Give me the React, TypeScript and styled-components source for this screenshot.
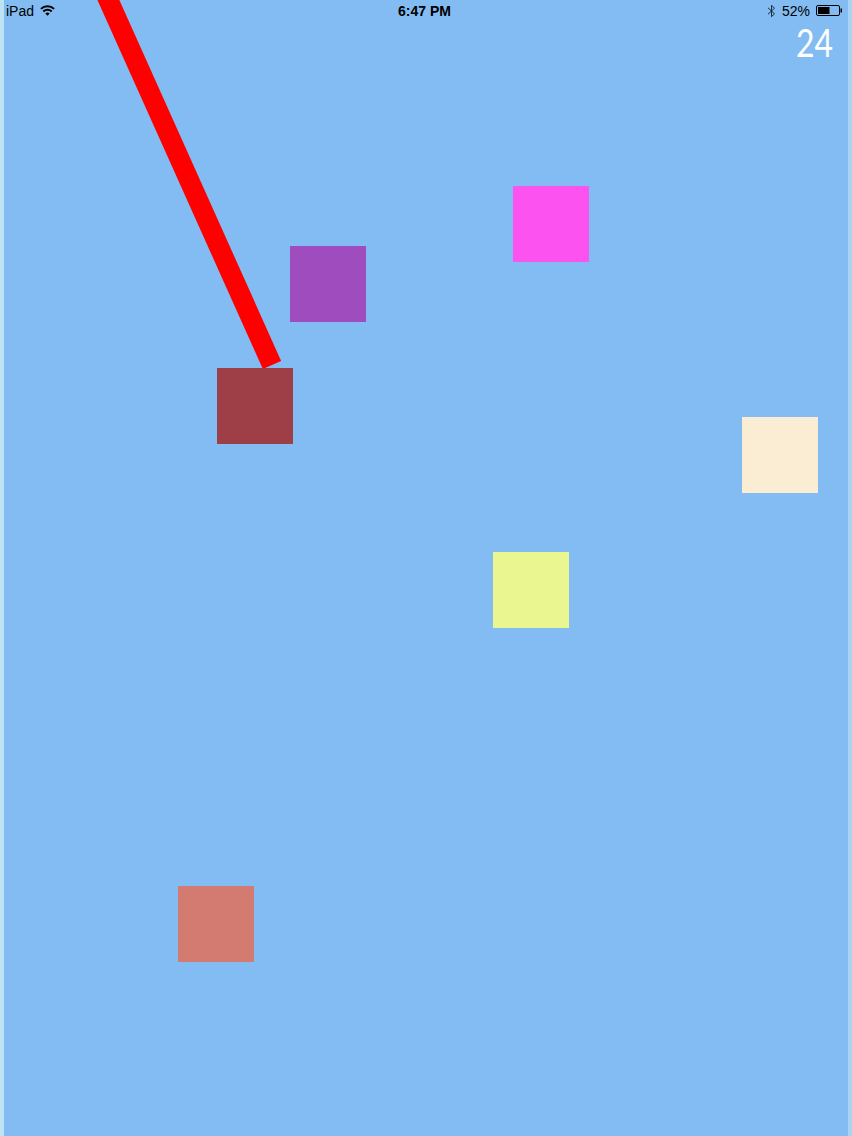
import styled, { createGlobalStyle } from "styled-components";

const GlobalStyle = createGlobalStyle`
  html, body {
    margin: 0;
    padding: 0;
    background: #83bcf2;
  }
  #root {
    width: 852px;
    height: 1136px;
  }
`;

const blocks = [
  { x: 290, y: 246, color: "#9f4cbe" },
  { x: 513, y: 186, color: "#fc52ef" },
  { x: 217, y: 368, color: "#9e3e47" },
  { x: 742, y: 417, color: "#fbecd4" },
  { x: 493, y: 552, color: "#eaf68f" },
  { x: 178, y: 886, color: "#d47b71" },
];

export default function App() {
  return (
    <>
      <GlobalStyle />
      <Screen>
        <Edge side="left" />
        <Field>
          <StatusBar>
            <StatusSide>
              <span>iPad</span>
              <WifiIcon />
            </StatusSide>
            <Clock>6:47 PM</Clock>
            <StatusSide align="right">
              <BluetoothIcon />
              <span>52%</span>
              <BatteryIcon />
            </StatusSide>
          </StatusBar>
          <ScoreRow>
            <Score>24</Score>
          </ScoreRow>
        </Field>
        <Edge side="right" />
        <Canvas>
          <Rope viewBox="0 0 852 1136" width="852" height="1136">
            <line
              x1="103"
              y1="-12"
              x2="272"
              y2="365"
              stroke="#ff0000"
              strokeWidth="20"
            />
          </Rope>
          {blocks.map((b, i) => (
            <Block key={i} color={b.color} style={{ left: b.x, top: b.y }} />
          ))}
        </Canvas>
      </Screen>
    </>
  );
}

function WifiIcon() {
  return (
    <svg width="15" height="11" viewBox="0 0 15 11">
      <path d="M0.9 3.9 A9.5 9.5 0 0 1 14.1 3.9" fill="none" stroke="#000" strokeWidth="2" />
      <path d="M3.3 6.5 A6 6 0 0 1 11.7 6.5" fill="none" stroke="#000" strokeWidth="2" />
      <path d="M7.5 10.8 L5.3 8.5 A3.1 3.1 0 0 1 9.7 8.5 Z" fill="#000" />
    </svg>
  );
}

function BluetoothIcon() {
  return (
    <svg width="9" height="14" viewBox="0 0 9 14">
      <path
        d="M1 3.8 L7.5 9.8 L4.5 12.7 L4.5 1.3 L7.5 4.2 L1 10.2"
        fill="none"
        stroke="#1c2a3a"
        strokeWidth="1"
      />
    </svg>
  );
}

function BatteryIcon() {
  return (
    <svg width="27" height="11" viewBox="0 0 27 11">
      <rect x="0.5" y="0.5" width="23" height="10" rx="1.5" fill="none" stroke="#000" strokeWidth="1" />
      <rect x="2" y="2" width="11.5" height="7" fill="#000" />
      <rect x="24.5" y="3.5" width="1.5" height="4" fill="#000" />
    </svg>
  );
}

const Screen = styled.div`
  position: relative;
  display: flex;
  width: 852px;
  height: 1136px;
  overflow: hidden;
  background: #83bcf2;
`;

const Edge = styled.div<{ side: "left" | "right" }>`
  width: 4px;
  flex: none;
  background: ${(p) => (p.side === "left" ? "#bde4f6" : "#a8d4f2")};
`;

const Field = styled.div`
  position: relative;
  z-index: 2;
  flex: 1;
  display: flex;
  flex-direction: column;
`;

const StatusBar = styled.div`
  display: grid;
  grid-template-columns: 1fr auto 1fr;
  align-items: center;
  height: 21px;
  padding: 0 5px 0 2px;
  font-family: "Liberation Sans", Arial, sans-serif;
  font-size: 14px;
  color: #000;
`;

const StatusSide = styled.div<{ align?: "right" }>`
  display: flex;
  align-items: center;
  gap: 6px;
  justify-content: ${(p) => (p.align === "right" ? "flex-end" : "flex-start")};
`;

const Clock = styled.div`
  font-weight: bold;
  font-size: 14px;
`;

const ScoreRow = styled.div`
  display: flex;
  justify-content: flex-end;
  padding-right: 15px;
`;

const Score = styled.div`
  font-family: "Lato", "Open Sans", sans-serif;
  font-size: 38px;
  line-height: 40px;
  color: #ffffff;
  margin-top: 1px;
  transform: scaleX(0.84);
  transform-origin: right center;
`;

const Canvas = styled.div`
  position: absolute;
  inset: 0;
  z-index: 1;
`;

const Rope = styled.svg`
  position: absolute;
  left: 0;
  top: 0;
`;

const Block = styled.div<{ color: string }>`
  position: absolute;
  width: 76px;
  height: 76px;
  background: ${(p) => p.color};
`;
